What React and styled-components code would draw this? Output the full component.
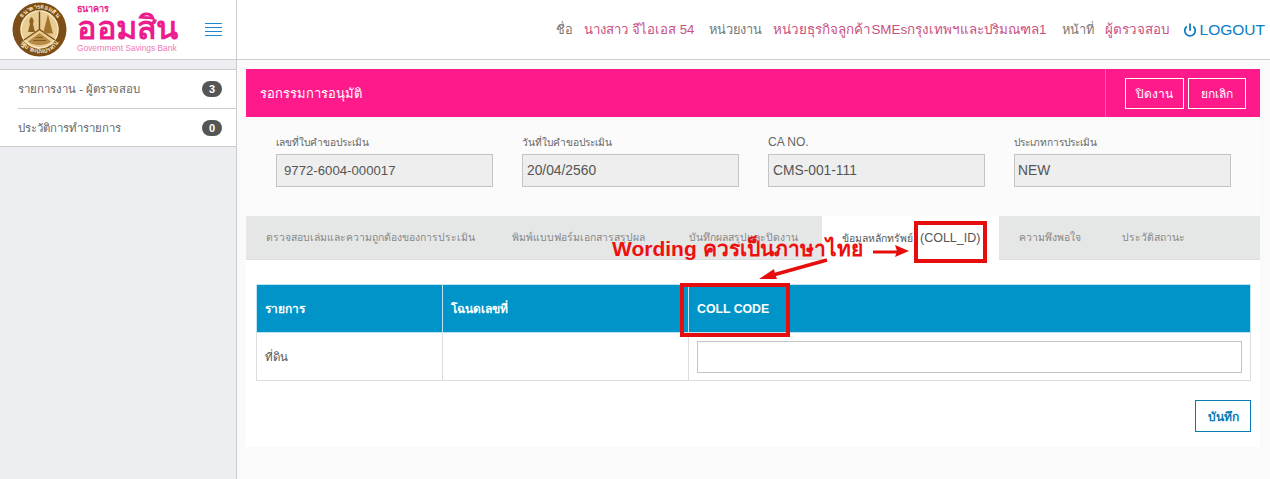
import React from 'react';
import styled, { createGlobalStyle } from 'styled-components';
import { Power } from 'lucide-react';

const Global = createGlobalStyle`
  html, body { margin: 0; padding: 0; background: #fafafa; }
  body { font-family: "Liberation Sans", Arial, "Noto Sans", sans-serif; color: #555; overflow: hidden; }
  * { box-sizing: border-box; }
`;
const Page = styled.div`position: relative; width: 1270px; height: 479px; overflow: hidden;`;
const Header = styled.header`display: flex; align-items: center; height: 60px; background: #fff; border-bottom: 1px solid #ccc;`;
const Brand = styled.div`display: flex; align-items: center; width: 237px; height: 59px; padding-left: 12px; border-right: 1px solid #ccc; flex: none;`;
const LogoText = styled.div`display: flex; flex-direction: column; margin-left: 10px; width: 118px; color: #ec1c8e;`;
const LogoSmall = styled.span`font-size: 9px; line-height: 9px; font-weight: 700;`;
const LogoBig = styled.span`font-size: 32.5px; line-height: 29px; font-weight: 700; letter-spacing: -0.4px; white-space: nowrap;`;
const LogoSub = styled.span`font-size: 8.4px; line-height: 11px; color: #ef79b9; white-space: nowrap;`;
const Burger = styled.div`display: flex; flex-direction: column; gap: 3px; width: 17px; margin-left: 10px;
  i { display: block; height: 1px; background: #1e88d0; }`;
const UserBar = styled.div`flex: 1; display: flex; justify-content: flex-end; align-items: center; padding-right: 5px; font-size: 13.4px; white-space: nowrap;`;
const Label = styled.span`color: #777; margin-left: 15px; font-size: 12.8px;`;
const Value = styled.span`color: #c9507f; margin-left: 11px; font-size: ${p => p.$size || 13.4}px;`;
const Logout = styled.span`display: inline-flex; align-items: center; gap: 3px; color: #0a7cc4; margin-left: 14px; font-size: 15.5px;`;
const Body = styled.div`display: flex; height: 419px;`;
const Sidebar = styled.aside`width: 237px; flex: none; background: #eceef2; border-right: 1px solid #ccc; padding-top: 9px;`;
const Menu = styled.div`background: #fff; border-top: 1px solid #ccc; border-bottom: 1px solid #ccc;`;
const MenuItem = styled.div`display: flex; align-items: center; justify-content: space-between; height: ${p => p.$h}px; margin-left: 18px; padding-right: 14px; font-size: 11.4px; color: #666; border-top: ${p => p.$line ? '1px solid #ccc' : 'none'};`;
const Badge = styled.span`display: flex; align-items: center; justify-content: center; width: 20px; height: 16px; border-radius: 8px; background: #555; color: #fff; font-size: 11px; font-weight: 700;`;
const Main = styled.main`flex: 1; padding: 9px 10px 0 9px;`;
const Titlebar = styled.div`display: flex; align-items: stretch; justify-content: space-between; height: 48px; background: #ff1a8c;`;
const Title = styled.div`display: flex; align-items: center; padding-left: 14px; color: #fff; font-size: 13px;`;
const Actions = styled.div`display: flex; align-items: center; gap: 4px; padding: 0 14px 0 19px; border-left: 1px solid #ff5aaa;`;
const HeadButton = styled.button`width: ${p => p.$w}px; height: 31px; padding: 0; background: transparent; border: 1px solid #fff; color: #fff; font: 12px "Liberation Sans", sans-serif;`;
const Fields = styled.div`display: grid; grid-template-columns: repeat(4, 217px); column-gap: 29px; height: 98px; padding: 17px 0 0 30px; background: #fbfbfb; margin-top: 1px;`;
const Field = styled.div`display: flex; flex-direction: column; gap: 4px;`;
const FieldLabel = styled.label`font-size: ${p => p.$latin ? '12px' : '10.2px'}; line-height: 15px; color: #666;`;
const ReadOnly = styled.div`display: flex; align-items: center; height: 33px; padding-left: ${p => p.$pad}px; background: #eee; border: 1px solid #c4c4c4; color: #555; font-size: ${p => p.$size || 13.8}px;`;
const Tabs = styled.div`display: flex; height: 44px; background: #e5e7e7; border-bottom: 1px solid #ddd; font-size: 10.4px; color: #888;`;
const Tab = styled.div`display: flex; align-items: center; height: ${p => p.$active ? '44px' : '43px'}; width: ${p => p.$w}px; padding-left: ${p => p.$pl}px; flex: none; white-space: nowrap;
  background: ${p => p.$active ? '#fff' : 'transparent'}; color: ${p => p.$active ? '#555' : '#888'};`;
const Latin = styled.span`font-size: 12.5px; margin-left: 7px;`;
const Content = styled.section`height: 187px; padding: 24px 9px 0 10px; background: #fff; display: flex; flex-direction: column; align-items: flex-end;`;
const Table = styled.table`width: 995px; border-collapse: collapse; table-layout: fixed; font-size: 11.5px;`;
const Th = styled.th`width: ${p => p.$w ? p.$w + 'px' : 'auto'}; height: 48px; padding: 0 8px; text-align: left; background: #0094c8; color: #fff; border: 1px solid #bfe4f1; font-size: ${p => p.$latin ? '12.3px' : '12px'};`;
const Td = styled.td`height: 48px; padding: 0 8px; border: 1px solid #ddd; color: #555;`;
const TextInput = styled.input`display: block; width: 545px; height: 32px; border: 1px solid #c4c4c4; background: #fff;`;
const SaveButton = styled.button`width: 56px; height: 32px; margin-top: 19px; padding: 0; background: #fff; border: 1px solid #0a7cb4; color: #0a7cb4; font: 700 12px "Liberation Sans", sans-serif;`;
const Note = styled.div`position: absolute; left: 612px; top: 235px; color: #ee0f0f; font-size: 21px; line-height: 28px; font-weight: 700; white-space: nowrap;`;
const RedBox = styled.div`position: absolute; border: 4px solid #e60d0d; left: ${p => p.$x}px; top: ${p => p.$y}px; width: ${p => p.$w}px; height: ${p => p.$h}px;`;
const Arrows = styled.svg`position: absolute; left: 0; top: 0; pointer-events: none;`;

const Seal = () => (
  <svg width="55" height="55" viewBox="0 0 55 55" aria-hidden="true">
    <defs>
      <path id="sealTop" d="M6.500 27.500a21 21 0 0 1 42 0" />
      <path id="sealBottom" d="M4 27.500a23.500 23.500 0 0 0 47 0" />
    </defs>
    <circle cx="27.500" cy="27.500" r="27" fill="#7d4f17" />
    <circle cx="27.500" cy="27.500" r="18.500" fill="#e9cd94" stroke="#f6e8c6" strokeWidth="1.500" />
    <text fontSize="6" fontWeight="700" fill="#f3e2bb" textAnchor="middle">
      <textPath href="#sealTop" startOffset="50%">ธนาคารออมสิน</textPath>
    </text>
    <text fontSize="6" fontWeight="700" fill="#f3e2bb" textAnchor="middle">
      <textPath href="#sealBottom" startOffset="50%">รัฐบาลเป็นประกัน</textPath>
    </text>
    <path d="M27.500 9.500v18L12 38M27.500 27.500L43 38" fill="none" stroke="#7a4d14" strokeWidth="1.400" />
    <path d="M19.500 15c-2.500 2-2.500 5-1.500 7l-2 8h7l-2-8c1-2 1-5-1.500-7z" fill="#8d6120" />
    <path d="M36 12.500l-5 19h10z" fill="#a37430" />
    <path d="M27.500 31L16 39.500c6 5 17 5 23 0z" fill="#b78a46" />
    <path d="M21 38.500h13M24 35.500h7" stroke="#7a4d14" strokeWidth="0.800" />
  </svg>
);

export default function App() {
  return (
    <Page>
      <Global />
      <Header>
        <Brand>
          <Seal />
          <LogoText>
            <LogoSmall>ธนาคาร</LogoSmall>
            <LogoBig>ออมสิน</LogoBig>
            <LogoSub>Government Savings Bank</LogoSub>
          </LogoText>
          <Burger><i /><i /><i /><i /></Burger>
        </Brand>
        <UserBar>
          <Label>ชื่อ</Label><Value $size={13.2}>นางสาว จีไอเอส 54</Value>
          <Label>หน่วยงาน</Label><Value>หน่วยธุรกิจลูกค้าSMEsกรุงเทพฯและปริมณฑล1</Value>
          <Label>หน้าที่</Label><Value>ผู้ตรวจสอบ</Value>
          <Logout><Power size={14} strokeWidth={3} />LOGOUT</Logout>
        </UserBar>
      </Header>
      <Body>
        <Sidebar>
          <Menu>
            <MenuItem $h={38}>รายการงาน - ผู้ตรวจสอบ<Badge>3</Badge></MenuItem>
            <MenuItem $h={38} $line>ประวัติการทำรายการ<Badge>0</Badge></MenuItem>
          </Menu>
        </Sidebar>
        <Main>
          <Titlebar>
            <Title>รอกรรมการอนุมัติ</Title>
            <Actions>
              <HeadButton $w={59}>ปิดงาน</HeadButton>
              <HeadButton $w={58}>ยกเลิก</HeadButton>
            </Actions>
          </Titlebar>
          <Fields>
            <Field><FieldLabel>เลขที่ใบคำขอประเมิน</FieldLabel><ReadOnly $pad={7} $size={13.2}>9772-6004-000017</ReadOnly></Field>
            <Field><FieldLabel>วันที่ใบคำขอประเมิน</FieldLabel><ReadOnly $pad={4}>20/04/2560</ReadOnly></Field>
            <Field><FieldLabel $latin>CA NO.</FieldLabel><ReadOnly $pad={4}>CMS-001-111</ReadOnly></Field>
            <Field><FieldLabel>ประเภทการประเมิน</FieldLabel><ReadOnly $pad={3}>NEW</ReadOnly></Field>
          </Fields>
          <Tabs>
            <Tab $w={247} $pl={20}>ตรวจสอบเล่มและความถูกต้องของการประเมิน</Tab>
            <Tab $w={177} $pl={19}>พิมพ์แบบฟอร์มเอกสารสรุปผล</Tab>
            <Tab $w={152} $pl={19}>บันทึกผลสรุปและปิดงาน</Tab>
            <Tab $w={177} $pl={20} $active>ข้อมูลหลักทรัพย์<Latin>(COLL_ID)</Latin></Tab>
            <Tab $w={102} $pl={20}>ความพึงพอใจ</Tab>
            <Tab $w={100} $pl={21}>ประวัติสถานะ</Tab>
          </Tabs>
          <Content>
            <Table>
              <thead>
                <tr>
                  <Th $w={186}>รายการ</Th>
                  <Th $w={246}>โฉนดเลขที่</Th>
                  <Th $latin>COLL CODE</Th>
                </tr>
              </thead>
              <tbody>
                <tr>
                  <Td>ที่ดิน</Td>
                  <Td />
                  <Td><TextInput /></Td>
                </tr>
              </tbody>
            </Table>
            <SaveButton>บันทึก</SaveButton>
          </Content>
        </Main>
      </Body>
      <Note>Wording ควรเป็นภาษาไทย</Note>
      <RedBox $x={914} $y={221} $w={73} $h={42} />
      <RedBox $x={680} $y={283} $w={110} $h={54} />
      <Arrows width="1270" height="479" viewBox="0 0 1270 479" aria-hidden="true">
        <path d="M873 252h26" stroke="#e60d0d" strokeWidth="3" fill="none" />
        <path d="M909 251l-14-6 2 6-2 6z" fill="#e60d0d" />
        <path d="M827 260l-54 15" stroke="#e60d0d" strokeWidth="3.500" fill="none" />
        <path d="M759 279l15-10 1 5 2 5z" fill="#e60d0d" />
      </Arrows>
    </Page>
  );
}
